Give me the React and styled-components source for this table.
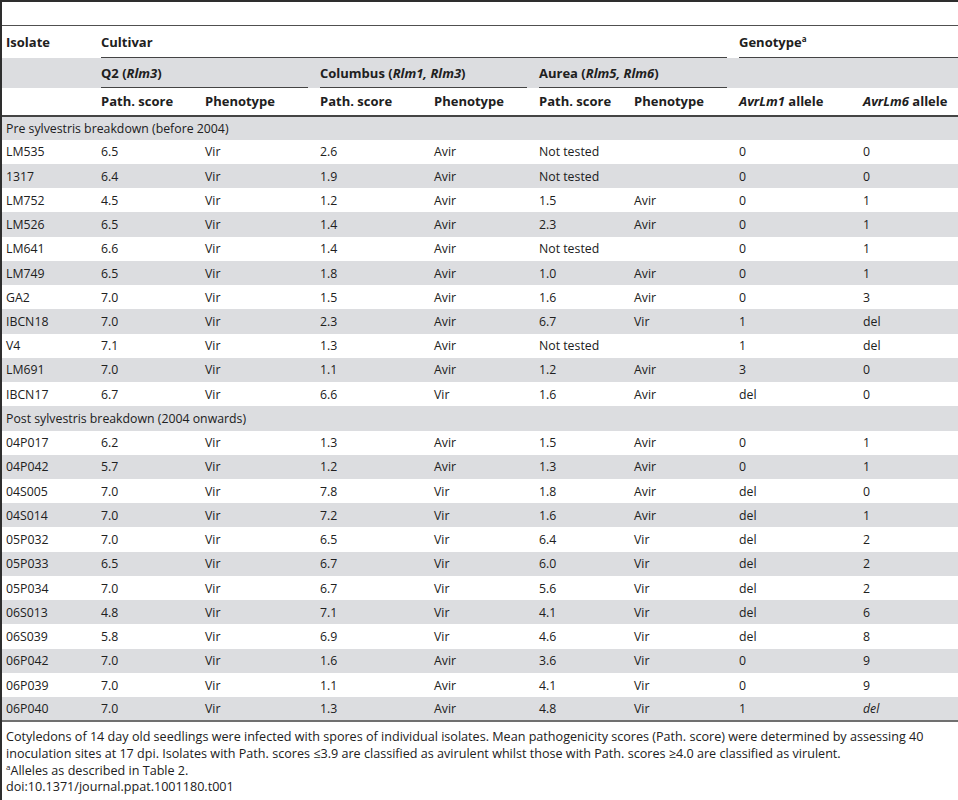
import React from "react";
import styled, { createGlobalStyle } from "styled-components";

const Global = createGlobalStyle`
  html, body { margin: 0; padding: 0; background: #fff; }
  body { font-family: "Open Sans", "Liberation Sans", sans-serif; color: #202020; }
`;

const Page = styled.div`
  width: 956px;
  min-height: 790px;
  border-top: 2px solid #2e2e2e;
  border-left: 2px solid #2e2e2e;
  padding-top: 23px;
`;

const Table = styled.table`
  width: 956px;
  border-collapse: collapse;
  table-layout: fixed;
  font-size: 12.3px;
  border-top: 1px solid #505050;
  border-bottom: 2px solid #707070;
`;

const HeadRow = styled.tr`
  height: ${(p) => p.$h}px;
  background: ${(p) => (p.$shade ? "#dcdde0" : "#fff")};
  ${(p) => (p.$last ? "border-bottom: 2px solid #444;" : "")}
`;

const Th = styled.th`
  text-align: left;
  font-weight: 700;
  font-size: 13px;
  padding: 0 6px;
  vertical-align: middle;
  white-space: nowrap;
  &:first-child { padding-left: 4px; }
  ${(p) =>
    p.$rule
      ? `background-image: linear-gradient(#444, #444);
         background-repeat: no-repeat;
         background-size: ${p.$full ? "calc(100% - 6px)" : "calc(100% - 12px)"} 1px;
         background-position: 6px 100%;`
      : ""}
`;

const Row = styled.tr`
  height: 24.24px;
  background: ${(p) => (p.$shade ? "#dcdde0" : "#fff")};
`;

const Td = styled.td`
  padding: 0 6px;
  white-space: nowrap;
  vertical-align: middle;
  font-style: ${(p) => (p.$italic ? "italic" : "normal")};
  &:first-child { padding-left: 4px; }
`;

const Notes = styled.div`
  padding: 7px 4px 0;
  font-size: 12.6px;
  line-height: 16.6px;
`;

const Sup = styled.sup`
  font-size: 8px;
  vertical-align: 5px;
  line-height: 0;
`;

const cols = [93, 104, 115, 114, 105, 95, 105, 124, 101];

const rows = [
  { section: "Pre sylvestris breakdown (before 2004)" },
  ["LM535", "6.5", "Vir", "2.6", "Avir", "Not tested", "", "0", "0"],
  ["1317", "6.4", "Vir", "1.9", "Avir", "Not tested", "", "0", "0"],
  ["LM752", "4.5", "Vir", "1.2", "Avir", "1.5", "Avir", "0", "1"],
  ["LM526", "6.5", "Vir", "1.4", "Avir", "2.3", "Avir", "0", "1"],
  ["LM641", "6.6", "Vir", "1.4", "Avir", "Not tested", "", "0", "1"],
  ["LM749", "6.5", "Vir", "1.8", "Avir", "1.0", "Avir", "0", "1"],
  ["GA2", "7.0", "Vir", "1.5", "Avir", "1.6", "Avir", "0", "3"],
  ["IBCN18", "7.0", "Vir", "2.3", "Avir", "6.7", "Vir", "1", "del"],
  ["V4", "7.1", "Vir", "1.3", "Avir", "Not tested", "", "1", "del"],
  ["LM691", "7.0", "Vir", "1.1", "Avir", "1.2", "Avir", "3", "0"],
  ["IBCN17", "6.7", "Vir", "6.6", "Vir", "1.6", "Avir", "del", "0"],
  { section: "Post sylvestris breakdown (2004 onwards)" },
  ["04P017", "6.2", "Vir", "1.3", "Avir", "1.5", "Avir", "0", "1"],
  ["04P042", "5.7", "Vir", "1.2", "Avir", "1.3", "Avir", "0", "1"],
  ["04S005", "7.0", "Vir", "7.8", "Vir", "1.8", "Avir", "del", "0"],
  ["04S014", "7.0", "Vir", "7.2", "Vir", "1.6", "Avir", "del", "1"],
  ["05P032", "7.0", "Vir", "6.5", "Vir", "6.4", "Vir", "del", "2"],
  ["05P033", "6.5", "Vir", "6.7", "Vir", "6.0", "Vir", "del", "2"],
  ["05P034", "7.0", "Vir", "6.7", "Vir", "5.6", "Vir", "del", "2"],
  ["06S013", "4.8", "Vir", "7.1", "Vir", "4.1", "Vir", "del", "6"],
  ["06S039", "5.8", "Vir", "6.9", "Vir", "4.6", "Vir", "del", "8"],
  ["06P042", "7.0", "Vir", "1.6", "Avir", "3.6", "Vir", "0", "9"],
  ["06P039", "7.0", "Vir", "1.1", "Avir", "4.1", "Vir", "0", "9"],
  ["06P040", "7.0", "Vir", "1.3", "Avir", "4.8", "Vir", "1", "del", true],
];

export default function App() {
  return (
    <>
      <Global />
      <Page>
        <Table>
          <colgroup>
            {cols.map((w, i) => (
              <col key={i} style={{ width: w }} />
            ))}
          </colgroup>
          <thead>
            <HeadRow $h={32}>
              <Th>Isolate</Th>
              <Th colSpan={6} $rule>Cultivar</Th>
              <Th colSpan={2} $rule $full>
                Genotype<Sup>a</Sup>
              </Th>
            </HeadRow>
            <HeadRow $h={30} $shade>
              <Th />
              <Th colSpan={2} $rule>
                Q2 (<i>Rlm3</i>)
              </Th>
              <Th colSpan={2} $rule>
                Columbus (<i>Rlm1, Rlm3</i>)
              </Th>
              <Th colSpan={2} $rule>
                Aurea (<i>Rlm5, Rlm6</i>)
              </Th>
              <Th colSpan={2} />
            </HeadRow>
            <HeadRow $h={28} $last>
              <Th />
              <Th>Path. score</Th>
              <Th>Phenotype</Th>
              <Th>Path. score</Th>
              <Th>Phenotype</Th>
              <Th>Path. score</Th>
              <Th>Phenotype</Th>
              <Th>
                <i>AvrLm1</i> allele
              </Th>
              <Th>
                <i>AvrLm6</i> allele
              </Th>
            </HeadRow>
          </thead>
          <tbody>
            {rows.map((r, i) =>
              r.section ? (
                <Row key={i} $shade={i % 2 === 0}>
                  <Td colSpan={9}>{r.section}</Td>
                </Row>
              ) : (
                <Row key={i} $shade={i % 2 === 0}>
                  {r.slice(0, 9).map((c, j) => (
                    <Td key={j} $italic={r[9] && j === 8}>
                      {c}
                    </Td>
                  ))}
                </Row>
              )
            )}
          </tbody>
        </Table>
        <Notes>
          <div>
            Cotyledons of 14 day old seedlings were infected with spores of individual isolates. Mean
            pathogenicity scores (Path. score) were determined by assessing 40 inoculation sites at 17
            dpi. Isolates with Path. scores ≤3.9 are classified as avirulent whilst those with Path.
            scores ≥4.0 are classified as virulent.
          </div>
          <div>
            <Sup>a</Sup>Alleles as described in Table 2.
          </div>
          <div>doi:10.1371/journal.ppat.1001180.t001</div>
        </Notes>
      </Page>
    </>
  );
}
